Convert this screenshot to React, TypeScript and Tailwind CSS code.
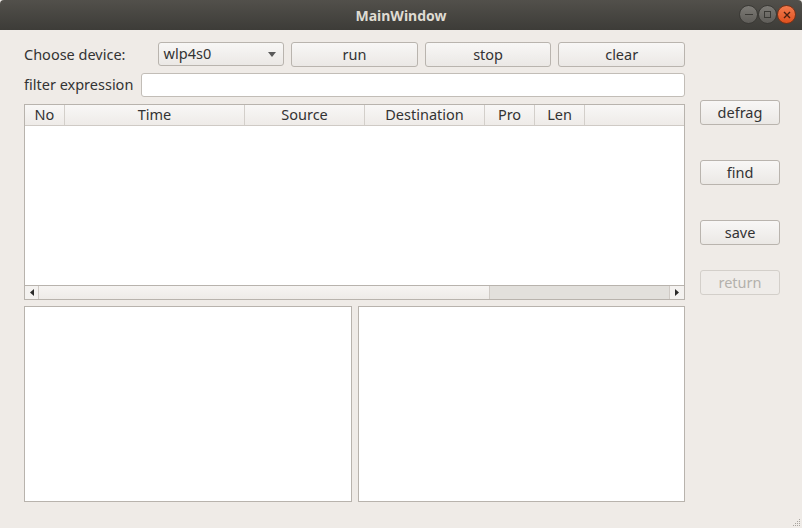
import React from "react";

const font = { fontFamily: '"Noto Sans", "Open Sans", "DejaVu Sans", sans-serif' };

function Btn({ label, disabled, className = "" }: { label: string; disabled?: boolean; className?: string }) {
  return (
    <div
      className={`h-[25px] flex items-center justify-center rounded-[3px] border text-[14.5px] ${
        disabled
          ? "border-[#d3cfca] bg-[#efece9] text-[#b4b1ac]"
          : "border-[#b9b4ae] bg-gradient-to-b from-[#f8f7f6] to-[#ebe8e5] text-[#333333]"
      } ${className}`}
    >
      {label}
    </div>
  );
}

function Col({ label, w, last }: { label: string; w?: string; last?: boolean }) {
  return (
    <div className={`${w ?? "flex-1"} h-full flex items-center justify-center ${last ? "" : "border-r border-[#d3cfca]"}`}>
      {label}
    </div>
  );
}

export default function App() {
  return (
    <div className="w-[802px] h-[528px] bg-[#efebe7] flex flex-col overflow-hidden text-[#333333]" style={font}>
      {/* title bar */}
      <div className="h-[30px] shrink-0 relative flex items-center justify-center bg-gradient-to-b from-[#52504b] to-[#3d3c38] rounded-t-[4px]">
        <span className="text-[14px] font-bold text-[#dfdbd2]">MainWindow</span>
        <div className="absolute right-[6px] top-[5px] flex gap-[0px]">
          <div className="w-[19px] h-[19px] rounded-full bg-gradient-to-b from-[#7d7b76] to-[#5f5d59] border border-[#3a3935] flex items-center justify-center">
            <div className="w-[8px] h-[1.5px] bg-[#3a3935]" />
          </div>
          <div className="w-[19px] h-[19px] rounded-full bg-gradient-to-b from-[#7d7b76] to-[#5f5d59] border border-[#3a3935] flex items-center justify-center">
            <div className="w-[7px] h-[7px] border border-[#3a3935]" />
          </div>
          <div className="w-[19px] h-[19px] rounded-full bg-gradient-to-b from-[#f27a4c] to-[#e0501c] border border-[#7a3116] flex items-center justify-center">
            <svg width="8" height="8" viewBox="0 0 8 8">
              <path d="M1 1 L7 7 M7 1 L1 7" stroke="#4a2010" strokeWidth="1.4" />
            </svg>
          </div>
        </div>
      </div>

      <div className="flex-1 flex pl-[24px] pt-[12px] relative">
        {/* left column */}
        <div className="w-[661px] flex flex-col">
          <div className="grid grid-cols-5 gap-[7px] h-[24px]">
            <div className="flex items-center text-[14.5px]">Choose device:</div>
            <div className="h-[24px] rounded-[3px] border border-[#b9b4ae] bg-gradient-to-b from-[#f8f7f6] to-[#ebe8e5] flex items-center justify-between pl-[5px] pr-[7px] text-[14.5px]">
              <span>wlp4s0</span>
              <svg width="8" height="5" viewBox="0 0 8 5">
                <path d="M0 0 L8 0 L4 5 Z" fill="#5a5a5a" />
              </svg>
            </div>
            <Btn label="run" className="h-[24px]" />
            <Btn label="stop" className="h-[24px]" />
            <Btn label="clear" className="h-[24px]" />
          </div>

          <div className="flex gap-[7px] h-[24px] mt-[7px]">
            <div className="w-[110px] flex items-center text-[14.5px] whitespace-nowrap">filter expression</div>
            <div className="flex-1 rounded-[3px] border border-[#c2bdb7] bg-white" />
          </div>

          <div className="mt-[7px] h-[196px] border border-[#b8b3ad] bg-white flex flex-col">
            <div className="h-[21px] shrink-0 flex border-b border-[#cfcac5] bg-gradient-to-b from-[#f8f7f6] to-[#eeebe8] text-[14.5px]">
              <Col label="No" w="w-[40px]" />
              <Col label="Time" w="w-[180px]" />
              <Col label="Source" w="w-[120px]" />
              <Col label="Destination" w="w-[120px]" />
              <Col label="Pro" w="w-[50px]" />
              <Col label="Len" w="w-[50px]" />
              <Col label="" last />
            </div>
            <div className="flex-1" />
            <div className="h-[14px] shrink-0 flex border-t border-[#b8b3ad]">
              <div className="w-[14px] border-r border-[#cfcac5] flex items-center justify-center bg-[#f4f2f0]">
                <svg width="4" height="7" viewBox="0 0 4 7">
                  <path d="M4 0 L0 3.5 L4 7 Z" fill="#2a2a2a" />
                </svg>
              </div>
              <div className="w-[450px] bg-gradient-to-b from-[#f6f4f2] to-[#eeebe8]" />
              <div className="flex-1 bg-[#e2e0dc] border-l border-[#cfcac5]" />
              <div className="w-[15px] border-l border-[#cfcac5] flex items-center justify-center bg-[#f4f2f0]">
                <svg width="4" height="7" viewBox="0 0 4 7">
                  <path d="M0 0 L4 3.5 L0 7 Z" fill="#2a2a2a" />
                </svg>
              </div>
            </div>
          </div>

          <div className="mt-[6px] h-[196px] flex gap-[6px]">
            <div className="w-[328px] border border-[#b8b3ad] bg-white" />
            <div className="flex-1 border border-[#b8b3ad] bg-white" />
          </div>
        </div>

        {/* right column */}
        <div className="ml-[15px] w-[80px] flex flex-col pt-[58px]">
          <Btn label="defrag" />
          <Btn label="find" className="mt-[35px]" />
          <Btn label="save" className="mt-[35px]" />
          <Btn label="return" disabled className="mt-[25px]" />
        </div>

        <svg className="absolute right-[1px] bottom-[1px]" width="10" height="10" viewBox="0 0 10 10">
          {[
            [8, 2], [6, 4], [8, 4], [4, 6], [6, 6], [8, 6], [2, 8], [4, 8], [6, 8], [8, 8],
          ].map(([x, y], i) => (
            <rect key={i} x={x} y={y} width="1" height="1" fill="#a8a49e" />
          ))}
        </svg>
      </div>
    </div>
  );
}
